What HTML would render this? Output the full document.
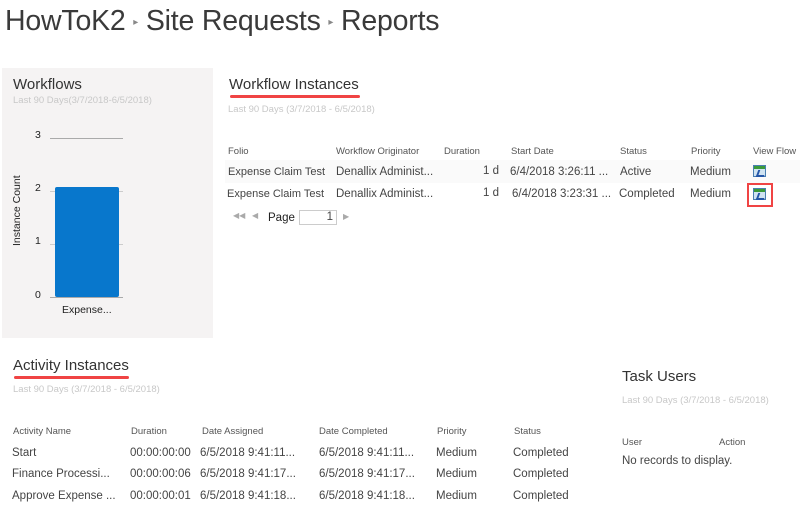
<!DOCTYPE html>
<html><head><style>
*{margin:0;padding:0;box-sizing:border-box}
body{width:800px;height:523px;background:#fff;font-family:"Liberation Sans",sans-serif;color:#333;position:relative;overflow:hidden}
.a{position:absolute;white-space:nowrap}
.h{font-size:15px;color:#333}
.sub{font-size:9.5px;color:#c8c8c8}
.th{font-size:9.5px;color:#555}
.td{font-size:11.5px;color:#444}
.red{position:absolute;height:3px;background:#f04444;border-radius:2px}
.ic{position:absolute;width:13px;height:12px;background:linear-gradient(#3a9a3a 0 3px,#cfe3f2 3px);border:1px solid #4a7fb0}
.ic:after{content:"";position:absolute;left:3px;top:4px;width:6px;height:5px;border-left:2px solid #2456a8;border-bottom:2px solid #2456a8;transform:skewX(-20deg)}
</style></head><body>
<div class="a" style="left:5px;top:5px;font-size:28.5px;color:#3a3a3a;letter-spacing:-0.2px">HowToK2 <span style="font-size:10px;color:#888;vertical-align:middle">&#9656;</span> Site Requests <span style="font-size:10px;color:#888;vertical-align:middle">&#9656;</span> Reports</div>

<div class="a" style="left:2px;top:68px;width:211px;height:270px;background:#f5f3f3"></div>
<div class="a h" style="left:13px;top:76px">Workflows</div>
<div class="a sub" style="left:13px;top:95px">Last 90 Days(3/7/2018-6/5/2018)</div>
<div class="a td" style="left:35px;top:129px;font-size:10.5px;color:#222">3</div>
<div class="a td" style="left:35px;top:182px;font-size:10.5px;color:#222">2</div>
<div class="a td" style="left:35px;top:235px;font-size:10.5px;color:#222">1</div>
<div class="a td" style="left:35px;top:289px;font-size:10.5px;color:#222">0</div>
<div class="a" style="left:50px;top:138px;width:73px;height:1px;background:#aaa"></div>
<div class="a" style="left:50px;top:191px;width:73px;height:1px;background:#ccc"></div>
<div class="a" style="left:50px;top:244px;width:73px;height:1px;background:#ccc"></div>
<div class="a" style="left:50px;top:297px;width:73px;height:1px;background:#aaa"></div>
<div class="a" style="left:55px;top:187px;width:64px;height:110px;background:#0877cc;border-radius:2px"></div>
<div class="a" style="left:62px;top:304px;font-size:10.5px;color:#222">Expense...</div>
<div class="a" style="left:11px;top:246px;font-size:10.5px;color:#222;transform:rotate(-90deg);transform-origin:0 0">Instance Count</div>

<div class="a h" style="left:229px;top:76px">Workflow Instances</div>
<div class="red" style="left:230px;top:95px;width:130px"></div>
<div class="a sub" style="left:228px;top:104px">Last 90 Days (3/7/2018 - 6/5/2018)</div>
<div class="a th" style="left:228px;top:146px">Folio</div>
<div class="a th" style="left:336px;top:146px">Workflow Originator</div>
<div class="a th" style="left:444px;top:146px">Duration</div>
<div class="a th" style="left:511px;top:146px">Start Date</div>
<div class="a th" style="left:620px;top:146px">Status</div>
<div class="a th" style="left:691px;top:146px">Priority</div>
<div class="a th" style="left:753px;top:146px">View Flow</div>
<div class="a" style="left:225px;top:160px;width:575px;height:23px;background:#fafafa"></div>
<div class="a td" style="left:228px;top:166px;font-size:11px">Expense Claim Test</div>
<div class="a td" style="left:336px;top:166px">Denallix Administ...</div>
<div class="a td" style="left:483px;top:165px">1 d</div>
<div class="a td" style="left:510px;top:166px">6/4/2018 3:26:11 ...</div>
<div class="a td" style="left:620px;top:166px">Active</div>
<div class="a td" style="left:690px;top:166px">Medium</div>
<div class="ic" style="left:753px;top:165px"></div>
<div class="a td" style="left:227px;top:188px;font-size:11px">Expense Claim Test</div>
<div class="a td" style="left:336px;top:188px">Denallix Administ...</div>
<div class="a td" style="left:483px;top:187px">1 d</div>
<div class="a td" style="left:512px;top:188px">6/4/2018 3:23:31 ...</div>
<div class="a td" style="left:619px;top:188px">Completed</div>
<div class="a td" style="left:690px;top:188px">Medium</div>
<div class="ic" style="left:753px;top:188px"></div>
<div class="a" style="left:747px;top:183px;width:26px;height:24px;border:2px solid #f04444"></div>
<div class="a" style="left:233px;top:211px;font-size:8px;color:#aaa">&#9664;&#9664;&nbsp;&nbsp;&nbsp;&#9664;</div>
<div class="a td" style="left:268px;top:212px;color:#222">Page</div>
<div class="a" style="left:299px;top:210px;width:38px;height:15px;border:1px solid #ccc;font-size:11.5px;text-align:right;padding-right:3px;color:#444;line-height:13px">1</div>
<div class="a" style="left:343px;top:212px;font-size:8px;color:#aaa">&#9654;</div>

<div class="a h" style="left:13px;top:357px">Activity Instances</div>
<div class="red" style="left:14px;top:376px;width:115px"></div>
<div class="a sub" style="left:13px;top:384px">Last 90 Days (3/7/2018 - 6/5/2018)</div>
<div class="a th" style="left:13px;top:426px">Activity Name</div>
<div class="a th" style="left:131px;top:426px">Duration</div>
<div class="a th" style="left:202px;top:426px">Date Assigned</div>
<div class="a th" style="left:319px;top:426px">Date Completed</div>
<div class="a th" style="left:437px;top:426px">Priority</div>
<div class="a th" style="left:514px;top:426px">Status</div>
<div class="a td" style="left:12px;top:447px">Start</div>
<div class="a td" style="left:130px;top:447px">00:00:00:00</div>
<div class="a td" style="left:200px;top:447px">6/5/2018 9:41:11...</div>
<div class="a td" style="left:319px;top:447px">6/5/2018 9:41:11...</div>
<div class="a td" style="left:436px;top:447px">Medium</div>
<div class="a td" style="left:513px;top:447px">Completed</div>
<div class="a td" style="left:12px;top:468px">Finance Processi...</div>
<div class="a td" style="left:130px;top:468px">00:00:00:06</div>
<div class="a td" style="left:200px;top:468px">6/5/2018 9:41:17...</div>
<div class="a td" style="left:319px;top:468px">6/5/2018 9:41:17...</div>
<div class="a td" style="left:436px;top:468px">Medium</div>
<div class="a td" style="left:513px;top:468px">Completed</div>
<div class="a td" style="left:12px;top:490px">Approve Expense ...</div>
<div class="a td" style="left:130px;top:490px">00:00:00:01</div>
<div class="a td" style="left:200px;top:490px">6/5/2018 9:41:18...</div>
<div class="a td" style="left:319px;top:490px">6/5/2018 9:41:18...</div>
<div class="a td" style="left:436px;top:490px">Medium</div>
<div class="a td" style="left:513px;top:490px">Completed</div>

<div class="a h" style="left:622px;top:368px">Task Users</div>
<div class="a sub" style="left:622px;top:395px">Last 90 Days (3/7/2018 - 6/5/2018)</div>
<div class="a th" style="left:622px;top:437px">User</div>
<div class="a th" style="left:719px;top:437px">Action</div>
<div class="a td" style="left:622px;top:455px">No records to display.</div>
</body></html>
